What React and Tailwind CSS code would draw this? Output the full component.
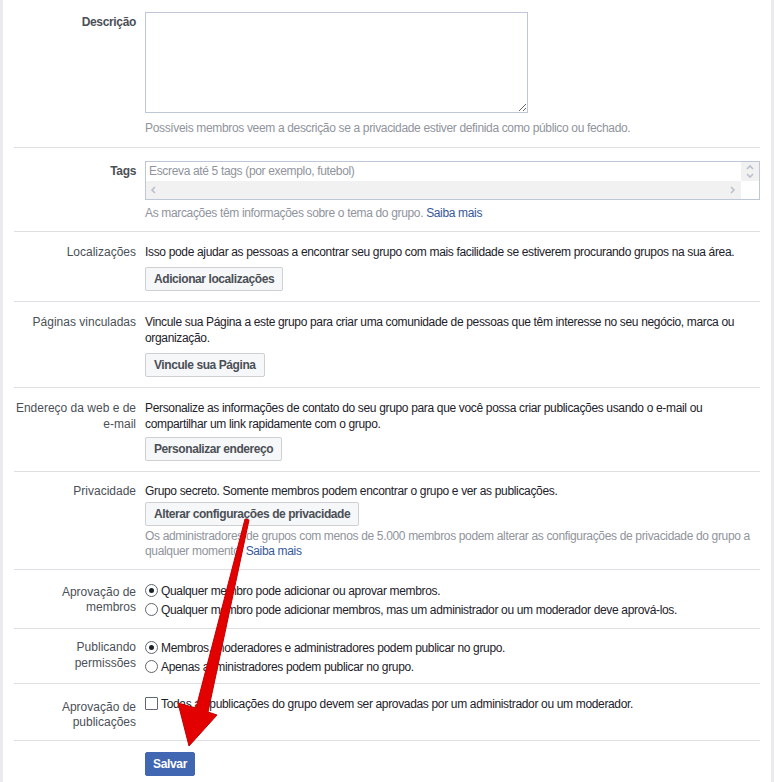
import React from 'react'

const FONT = "font-['Liberation_Sans',Arial,sans-serif] tracking-[-0.34px]"

function Row({ label, bold, labelCls = 'pt-0', rowCls = 'pt-3 pb-[10px]', last, children }) {
  return (
    <div className={`flex ${rowCls} ${last ? '' : 'border-b border-[#dddfe2]'}`}>
      <div
        className={`w-[122px] shrink-0 text-right text-[12px] leading-[16px] text-[#4b4f56] ${
          bold ? 'font-bold' : 'tracking-normal'
        } ${labelCls}`}
      >
        {label}
      </div>
      <div className="ml-[9px] flex-1 min-w-0 text-[12px] leading-[16px] text-[#1d2129]">{children}</div>
    </div>
  )
}

function Btn({ children, className = '' }) {
  return (
    <button
      className={`h-[24px] px-[8px] rounded-[2px] border border-[#ced0d4] bg-[#f6f7f9] text-[12px] font-bold tracking-[-0.42px] text-[#4b4f56] leading-[22px] ${className}`}
    >
      {children}
    </button>
  )
}

function Radio({ checked, children }) {
  return (
    <div className="flex items-center h-[19px]">
      <span className="w-[13px] h-[13px] rounded-full border border-[#606770] bg-white flex items-center justify-center shrink-0">
        {checked && <span className="w-[5px] h-[5px] rounded-full bg-[#1d2129]" />}
      </span>
      <span className="ml-[3px]">{children}</span>
    </div>
  )
}

function Chevron({ dir }) {
  const d = {
    left: 'M5 1 L2 4 L5 7',
    right: 'M2 1 L5 4 L2 7',
    up: 'M1 5 L4 2 L7 5',
    down: 'M1 2 L4 5 L7 2',
  }[dir]
  return (
    <svg width="8" height="8" viewBox="0 0 8 8" fill="none">
      <path d={d} stroke="#b9c0cc" strokeWidth="1.6" />
    </svg>
  )
}

export default function App() {
  return (
    <div className={`relative w-[774px] min-h-[782px] bg-white ${FONT}`}>
      <div className="min-h-[782px] border-x-[3px] border-[#e9ebee] px-[11px]">
        {/* Descrição */}
        <Row label="Descrição" bold labelCls="pt-[2px]" rowCls="pt-3 pb-[11px]">
          <textarea className="block w-[383px] h-[101px] border border-[#bdc7d8] outline-none resize-y" />
          <p className="mt-[7px] text-[#90949c]">
            Possíveis membros veem a descrição se a privacidade estiver definida como público ou fechado.
          </p>
        </Row>

        {/* Tags */}
        <Row label="Tags" bold labelCls="pt-[2px]" rowCls="pt-[13px] pb-[10px]">
          <div className="border border-[#bdc7d8] h-[39px] flex flex-col">
            <div className="flex h-[19px]">
              <div className="flex-1 pl-[3px] pt-[1px] text-[#90949c]">Escreva até 5 tags (por exemplo, futebol)</div>
              <div className="w-[18px] bg-[#f1f1f1] flex flex-col items-center justify-center">
                <Chevron dir="up" />
                <Chevron dir="down" />
              </div>
            </div>
            <div className="flex h-[18px]">
              <div className="flex-1 bg-[#f1f1f1] flex items-center justify-between px-[4px]">
                <Chevron dir="left" />
                <Chevron dir="right" />
              </div>
              <div className="w-[18px]" />
            </div>
          </div>
          <p className="mt-[5px] text-[#90949c]">
            As marcações têm informações sobre o tema do grupo. <span className="text-[#365899]">Saiba mais</span>
          </p>
        </Row>

        {/* Localizações */}
        <Row label="Localizações">
          <p>Isso pode ajudar as pessoas a encontrar seu grupo com mais facilidade se estiverem procurando grupos na sua área.</p>
          <Btn className="mt-[7px]">Adicionar localizações</Btn>
        </Row>

        {/* Páginas vinculadas */}
        <Row label="Páginas vinculadas">
          <p className="pr-[20px]">
            Vincule sua Página a este grupo para criar uma comunidade de pessoas que têm interesse no seu negócio, marca ou organização.
          </p>
          <Btn className="mt-[7px]">Vincule sua Página</Btn>
        </Row>

        {/* Endereço */}
        <Row
          label={
            <>
              Endereço da web e de
              <br />
              e-mail
            </>
          }
        >
          <p className="pr-[20px]">
            Personalize as informações de contato do seu grupo para que você possa criar publicações usando o e-mail ou compartilhar um link rapidamente com o grupo.
          </p>
          <Btn className="mt-[5px]">Personalizar endereço</Btn>
        </Row>

        {/* Privacidade */}
        <Row label="Privacidade" rowCls="pt-[11px] pb-[10px]">
          <p>Grupo secreto. Somente membros podem encontrar o grupo e ver as publicações.</p>
          <Btn className="mt-[3px]">Alterar configurações de privacidade</Btn>
          <p className="mt-[3px] leading-[15px] text-[#90949c]">
            Os administradores de grupos com menos de 5.000 membros podem alterar as configurações de privacidade do grupo a qualquer momento.{' '}
            <span className="text-[#365899]">Saiba mais</span>
          </p>
        </Row>

        {/* Aprovação de membros */}
        <Row
          label={
            <>
              Aprovação de
              <br />
              membros
            </>
          }
          labelCls="pt-[4px] !leading-[15px]"
          rowCls="pt-[11px] pb-[9px]"
        >
          <Radio checked>Qualquer membro pode adicionar ou aprovar membros.</Radio>
          <Radio>Qualquer membro pode adicionar membros, mas um administrador ou um moderador deve aprová-los.</Radio>
        </Row>

        {/* Publicando permissões */}
        <Row
          label={
            <>
              Publicando
              <br />
              permissões
            </>
          }
          labelCls="pt-[1px]"
          rowCls="pt-[9px] pb-[7px]"
        >
          <Radio checked>Membros, moderadores e administradores podem publicar no grupo.</Radio>
          <Radio>Apenas administradores podem publicar no grupo.</Radio>
        </Row>

        {/* Aprovação de publicações */}
        <Row
          label={
            <>
              Aprovação de
              <br />
              publicações
            </>
          }
          labelCls="pt-[6px] !leading-[15px]"
          rowCls="pt-[10px] pb-[10px]"
        >
          <div className="flex items-center h-[19px]">
            <span className="w-[13px] h-[13px] rounded-[1px] border border-[#606770] bg-white shrink-0" />
            <span className="ml-[3px]">
              Todas as publicações do grupo devem ser aprovadas por um administrador ou um moderador.
            </span>
          </div>
        </Row>

        {/* Salvar */}
        <Row label="" last rowCls="pt-[11px] pb-3">
          <button className="h-[24px] px-[7px] rounded-[2px] border border-[#4267b2] bg-[#4267b2] text-[12px] font-bold text-white leading-[22px]">
            Salvar
          </button>
        </Row>
      </div>

      {/* red annotation arrow */}
      <svg className="absolute left-0 top-0 pointer-events-none" width="774" height="782" viewBox="0 0 774 782">
        <polygon
          points="245,519 249,520 208,712 217,715 189,746 178,703 196,708"
          fill="#e30000"
          stroke="#c40000"
          strokeWidth="1"
          strokeLinejoin="round"
        />
      </svg>
    </div>
  )
}
